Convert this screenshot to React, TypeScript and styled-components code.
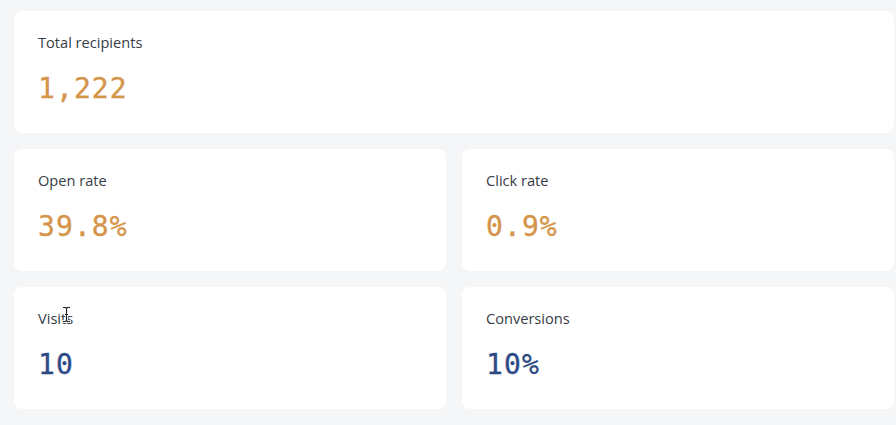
import React from "react";
import styled, { createGlobalStyle } from "styled-components";

const Global = createGlobalStyle`
  html, body { margin: 0; padding: 0; background: #f5f6f8; }
  body { font-family: "Open Sans", "Noto Sans", sans-serif; }
  * { box-sizing: border-box; }
`;

const Page = styled.div`
  width: 896px;
  min-height: 425px;
  padding: 11px 2px 16px 14px;
  background: #f5f6f8;
`;

const Grid = styled.div`
  display: grid;
  grid-template-columns: 1fr 1fr;
  gap: 16px 16px;
`;

const Card = styled.section<{ $wide?: boolean }>`
  position: relative;
  grid-column: ${(p) => (p.$wide ? "1 / -1" : "auto")};
  height: 122px;
  background: #ffffff;
  border-radius: 8px;
  padding: 21px 24px;
  display: flex;
  flex-direction: column;
  gap: 22px;
`;

const Label = styled.div`
  font-family: "Open Sans", "Noto Sans", sans-serif;
  font-size: 14.6px;
  line-height: 20px;
  color: #373c45;
  font-weight: 500;
`;

const Value = styled.div<{ $tone: "warm" | "cool" }>`
  font-family: "DejaVu Sans Mono", "Liberation Mono", monospace;
  font-size: 28px;
  line-height: 30px;
  letter-spacing: 1.1px;
  color: ${(p) => (p.$tone === "warm" ? "#d4954a" : "#2e4a86")};
  -webkit-text-stroke: 0.35px currentColor;
`;

const Caret = styled.svg`
  position: absolute;
  left: 48px;
  top: 19px;
  pointer-events: none;
`;

type Stat = { label: string; value: string; tone: "warm" | "cool"; wide?: boolean; caret?: boolean };

const stats: Stat[] = [
  { label: "Total recipients", value: "1,222", tone: "warm", wide: true },
  { label: "Open rate", value: "39.8%", tone: "warm" },
  { label: "Click rate", value: "0.9%", tone: "warm" },
  { label: "Visits", value: "10", tone: "cool", caret: true },
  { label: "Conversions", value: "10%", tone: "cool" },
];

export default function App() {
  return (
    <Page>
      <Global />
      <Grid>
        {stats.map((s) => (
          <Card key={s.label} $wide={s.wide}>
            <Label>{s.label}</Label>
            <Value $tone={s.tone}>{s.value}</Value>
            {s.caret && (
              <Caret width="9" height="17" viewBox="0 0 9 17">
                <path
                  d="M1 1.5h2.5L4.5 2.5L5.5 1.5H8M4.5 2.5V14.5M1 15.5h2.5L4.5 14.5L5.5 15.5H8M3 8.5h3"
                  fill="none"
                  stroke="#ffffff"
                  strokeWidth="2.6"
                  strokeLinecap="round"
                  strokeLinejoin="round"
                />
                <path
                  d="M1 1.5h2.5L4.5 2.5L5.5 1.5H8M4.5 2.5V14.5M1 15.5h2.5L4.5 14.5L5.5 15.5H8M3 8.5h3"
                  fill="none"
                  stroke="#222222"
                  strokeWidth="1.1"
                />
              </Caret>
            )}
          </Card>
        ))}
      </Grid>
    </Page>
  );
}
